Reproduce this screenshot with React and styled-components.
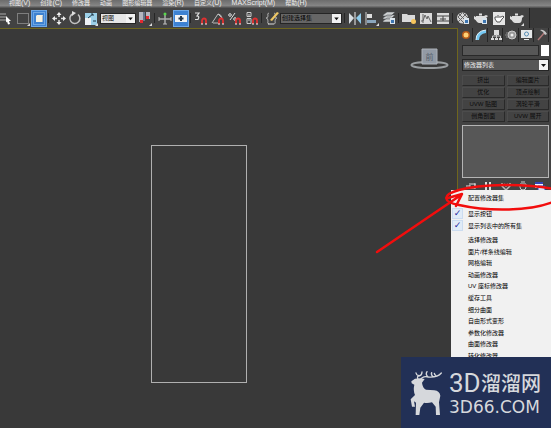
import React from 'react';
import styled, { createGlobalStyle } from 'styled-components';

const Global = createGlobalStyle`
  * { box-sizing: border-box; }
  body { margin: 0; background: #393939; font-family: "Liberation Sans", "Noto Sans CJK SC", sans-serif; font-size: 6px; color: #ddd; overflow: hidden; }
  button, input, select { font: inherit; color: inherit; margin: 0; padding: 0; border: 0; background: none; border-radius: 0; }
  svg { display: block; }
`;

const Page = styled.div`
  position: relative;
  display: flex;
  flex-direction: column;
  min-height: 100vh;
  overflow: hidden;
`;

const MenuBar = styled.nav`
  display: flex;
  align-items: flex-end;
  gap: 10px;
  height: 8px;
  padding-left: 9px;
  overflow: hidden;
  background: linear-gradient(#6c6c6c, #858585 70%, #4a4a4a);
`;

const MenuButton = styled.button`
  flex: none;
  height: 11px;
  line-height: 11px;
  color: #eee;
  white-space: nowrap;
`;

const Latin = styled.span`
  font-size: 7px;
`;

const ToolBar = styled.div`
  display: flex;
  align-items: center;
  align-self: flex-start;
  height: 20px;
  padding-right: 5px;
  background: #424242;
  border-right: 1px solid #222;
`;

const ToolGroup = styled.div`
  display: flex;
  align-items: center;
  gap: ${(p) => p.$gap}px;
`;

const Separator = styled.span`
  width: 6px;
  height: 10px;
  background: linear-gradient(90deg, transparent 2px, #262626 2px, #262626 3px, transparent 3px);
`;

const ToolButton = styled.button`
  width: 14px;
  height: 15px;
  && { background: ${(p) => (p.$active ? '#3d82d2' : 'none')}; }
  outline: ${(p) => (p.$active ? '1px solid #6ea8e6' : 'none')};
`;

const SelectBox = styled.div`
  position: relative;
  width: ${(p) => p.$width};
  height: ${(p) => p.$height}px;
  background: ${(p) => p.$fill};
  color: ${(p) => p.$ink};
  border: 1px solid #252525;

  select {
    appearance: none;
    display: block;
    width: 100%;
    height: 100%;
    padding: 0 10px 0 1px;
    line-height: 8px;
  }

  svg {
    position: absolute;
    top: 0;
    right: 0;
    height: 100%;
    background: #f2f2f2;
    pointer-events: none;
  }
`;

const Workspace = styled.main`
  flex: 1;
  display: grid;
  grid-template-columns: 1fr 93px;
`;

const Viewport = styled.section`
  position: relative;
  border-top: 1px solid #6f661e;
  border-right: 1px solid #6f661e;
`;

const Shape = styled.div`
  position: absolute;
  left: 151px;
  top: 116px;
  width: 96px;
  height: 238px;
  border: 1px solid #b0b0b0;
`;

const ViewCube = styled.svg`
  position: absolute;
  right: 8px;
  top: 18px;
`;

const Panel = styled.aside`
  display: flex;
  flex-direction: column;
  padding: 0 2px 0 4px;
  background: #434343;
`;

const Tabs = styled.div`
  display: flex;
  justify-content: space-between;
  height: 17px;
  margin-left: -3px;
`;

const Tab = styled.button`
  width: 14px;
  height: 14px;
  && { border-right: 1px solid #262626; }
`;

const NameRow = styled.div`
  display: flex;
  gap: 2px;
  height: 11px;
`;

const NameInput = styled.input`
  flex: 1;
  min-width: 0;
  && {
    background: #575757;
    border: 1px solid #292929;
  }
`;

const Swatch = styled.button`
  width: 8px;
  && { background: #fff; }
`;

const ListSelect = styled.div`
  margin-top: 3px;
`;

const ModifierGrid = styled.div`
  display: grid;
  grid-template-columns: 1fr 1fr;
  gap: 1px 2px;
  margin: 4px 0 3px;
`;

const Modifier = styled.button`
  height: 11px;
  line-height: 9px;
  && {
    color: #0c0c0c;
    border: 1px solid #4c4c4c;
    border-right-color: #292929;
    border-bottom-color: #292929;
  }
`;

const Stack = styled.div`
  height: 53px;
  background: #575757;
  border: 1px solid #b4b4b4;
`;

const StackTools = styled.div`
  display: flex;
  justify-content: space-between;
  padding: 3px 3px 0;
`;

const Popup = styled.div`
  position: absolute;
  top: 190px;
  right: 0;
  width: 100px;
  padding: 2px 0 0 1px;
  background: #f1f1f1;
  color: #000;
`;

const PopupItem = styled.button`
  display: block;
  width: 100%;
  height: 12px;
  padding-left: 16px !important;
  line-height: 12px;
  text-align: left;
`;

const CheckItem = styled.label`
  display: flex;
  align-items: center;
  gap: 5px;
  height: 12px;

  input {
    appearance: none;
    width: 11px;
    height: 11px;
    background: #e0ebf7;
    border: 1px solid #cbdcf0;
    color: #252aa0;
    font: bold 9px/9px "DejaVu Sans", sans-serif;
    text-align: center;
  }

  input:checked::before { content: "✓"; }
`;

const CheckGroup = styled.div`
  padding: 3px 0 4px;
`;

const SetList = styled.div`
  display: flex;
  flex-direction: column;
  height: 127px;

  button {
    flex: 1;
    height: auto;
    line-height: 11px;
  }
`;

const Annotation = styled.svg`
  position: absolute;
  top: 180px;
  right: 0;
  pointer-events: none;
`;

const Watermark = styled.div`
  position: absolute;
  top: 357px;
  right: 0;
  display: flex;
  align-items: center;
  gap: 6px;
  width: 150px;
  height: 71px;
  padding-left: 9px;
  background: #223056;
  color: #d6d8dc;
`;

const Brand = styled.div`
  display: flex;
  flex-direction: column;
  gap: 3px;
`;

const BrandName = styled.div`
  display: flex;
  align-items: center;
  height: 26px;
  font: 500 20px/26px "Noto Sans CJK SC", sans-serif;
`;

const BrandLead = styled.span`
  width: 32px;
  font: 26px/26px Roboto, sans-serif;
`;

const BrandSite = styled.div`
  font: 17px/16px "DejaVu Sans", sans-serif;
`;

const light = '#dedede';

const Magnet = () => (
  <>
    <path d="M8 13V9.500a2 2 0 0 1 4 0V13" fill="none" stroke="#df3030" strokeWidth="1.800" />
    <path d="M7 13h2M11 13h2" stroke="#eee" />
  </>
);

const Teapot = ({ fill = light }) => (
  <path d="M2 5h8l2-1 2 1-2 2c0 3-1 5-3 5H5C3 12 2.500 9 0 8V5l2 1zM5 4.500h3v-2H5z" fill={fill} />
);

const icons = {
  list: <><path d="M0 3h6M0 6h6M0 9h6" stroke="#aaa" /><path d="m6 5 5 5H9l1 3-2 .5-1-3-1 1z" fill="#fff" /></>,
  region: <><path d="M1.500 2.500h11v10h-11z" fill="none" stroke="#bbb" strokeDasharray="1 1" /><path d="M14 12v3h-3z" fill="#ddd" /></>,
  crossing: <><path d="M1.500 1.500h11v12h-11z" fill="none" stroke="#a5cdf3" strokeDasharray="1 1" /><path d="m4 5 1-1h6v6l-1 1H4z" fill="#f3f0e2" /><path d="M10 5v6l1-1V4z" fill="#b0bcc8" /></>,
  move: <><path d="M7 3v3M7 9v3M2 7.500h3M9 7.500h3" stroke="#ddd" strokeWidth="1.500" /><path d="m7 1 2.500 3h-5zM7 14l2.500-3h-5zM0 7.500 3 5v5zM14 7.500 11 5v5z" fill="#eee" /></>,
  rotate: <><path d="M10 3.500a5 5 0 1 1-5.500-.5" fill="none" stroke="#c2c2c2" strokeWidth="1.500" /><path d="m4 0 4 2-4 3z" fill="#ddd" /></>,
  scale: <><path d="M1 2h12v12H1z" fill="#9cd0e8" /><path d="M1 7h6v7H1z" fill="#eef2f4" /><path d="m4 7 5-4M7 3h2v2M9 10h3" stroke="#223b4b" fill="none" /><path d="M14 12v3h-3z" fill="#ddd" /></>,
  pivot: <><path d="M1 1h4v10H1zM8 1h4v7H8z" fill="#b4b7c0" /><path d="M5 1h2v9H5z" fill="#66758b" /><path d="M2 9h3v3H2zM8 5h3v3H8z" fill="#e32a30" /><path d="M14 12v3h-3z" fill="#ddd" /></>,
  manipulate: <><path d="M7 2v11M1 8h12" stroke="#aaa" strokeWidth="1.500" /><circle cx="7" cy="3" r="1.500" fill="#59d64c" /><path d="M1 6v4M13 6v4M5 13h4" stroke="#bbb" /></>,
  keyboard: <><path d="M1 4h12v7H1z" fill="#f1f3f4" /><path d="M7 5v5M4.500 7.500h5" stroke="#26394b" strokeWidth="2" /></>,
  snap: <><path d="M1 2h4L3 5q3 0 1 3.500H1" fill="none" stroke="#ddd" strokeWidth="1.200" /><Magnet /></>,
  angle: <><path d="M1 12 7 3l5 5M2 12h5M7 3q3 0 4 4" fill="none" stroke="#bbb" /><Magnet /></>,
  percent: <><path d="m2 9 5-7" stroke="#ddd" /><circle cx="2" cy="4" r="1.300" fill="none" stroke="#ddd" /><circle cx="7" cy="8" r="1.300" fill="none" stroke="#ddd" /><Magnet /></>,
  spinner: <><path d="M2 1.500h4v4H2zM2 7.500h4v5H2z" fill="none" stroke="#ccc" /><path d="M3 4h2M3 9h2" stroke="#ccc" /><Magnet /></>,
  edit: <><path d="M4 2Q2 2 3 5q0 2-2 2 2 0 2 3-1 3 1 3M9 2q2 0 1 3 0 2 2 2-2 0-2 3 1 3-1 3" fill="none" stroke="#aaa" /><path d="m5 9 7-8 2 1-7 8z" fill="#efc764" /><path d="M3 13h6" stroke="#ddd" /></>,
  mirror: <><path d="m1 2 5 5-5 6z" fill="#d6dce0" /><path d="M13 2 8 7l5 6z" fill="#8fcbea" /><path d="M7 1v13" stroke="#eee" /></>,
  align: <><path d="M1 1v13" stroke="#ccc" /><path d="M2 3h5v4H2z" fill="#ddd" /><path d="M2 9h9v3H2z" fill="#8ba7bd" /><path d="M14 12v3h-3z" fill="#ddd" /></>,
  layers: <><path d="m1 10 4-3h8l-4 4H1zM1 7l4-3h8L9 8H1zM1 4l4-3h8L9 5H1z" fill="#ced1d2" stroke="#4b4f52" strokeWidth=".5" /><path d="M8 7h5v6H8z" fill="#dce5ec" /><path d="M9 9h3v3H9z" fill="#3e76b1" /></>,
  ribbon: <><path d="M0 3h5l1 1h7v7H0z" fill="#dadada" /><circle cx="11.500" cy="10.500" r="2.500" fill="#f7c65c" /></>,
  curve: <><path d="M1 2h12v11H1z" fill="#dadada" /><path d="M2 10h2l2-6 2 4 1-3 3 6M4 3v9" stroke="#656565" fill="none" /></>,
  schematic: <><path d="M1 2h12v11H1z" fill="#dadada" /><path d="M1 5h12M1 10h12M7 5v5M4 8h6" stroke="#444" /></>,
  material: <><circle cx="6.500" cy="7" r="5.500" fill="#d4d4d4" /><path d="m3 3 8 8M2 6l6 6M7 2l5 5M10 3l-8 8M6 2 2 6" stroke="#666" /><path d="M8 7h5v6H8z" fill="#dce5ec" /><path d="M9 9h3v3H9z" fill="#3e76b1" /></>,
  setup: <><Teapot /><path d="M8 7h5v6H8z" fill="#d9e3eb" /><path d="M9 9h3v3H9z" fill="#3e76b1" /></>,
  frame: <><path d="M1 1h12v13H1z" fill="#e5e5e5" /><path d="M3 6h6l2-1 1 1-2 2-2 3H5L3 8zM6 5V4" fill="#fff" stroke="#555" /></>,
  render: <><Teapot /><path d="M14 12v3h-3z" fill="#ddd" /></>,
};

const Drawing = ({ name }) => <svg width="14" height="15" viewBox="0 0 14 15" aria-hidden="true">{icons[name]}</svg>;

const Tools = ({ names, gap = 2, active, children }) => (
  <ToolGroup $gap={gap}>
    {names.map((n) => n === '*' ? <React.Fragment key={n}>{children}</React.Fragment> : (
      <ToolButton key={n} aria-label={n} $active={active === n}><Drawing name={n} /></ToolButton>
    ))}
  </ToolGroup>
);

const Dropdown = ({ label, value, width = '100%', height, fill, ink }) => (
  <SelectBox $width={width} $height={height} $fill={fill} $ink={ink}>
    <select aria-label={label}><option>{value}</option></select>
    <svg width="9" viewBox="0 0 9 10" aria-hidden="true"><path d="M2 4h5L4.500 7z" fill="#111" /></svg>
  </SelectBox>
);

const menus = [['视图', '(V)'], ['创建', '(C)'], ['修改器', ''], ['动画', ''], ['图形编辑器', ''], ['渲染', '(R)'], ['自定义', '(U)'], ['', 'MAXScript(M)'], ['帮助', '(H)']];
const modifiers = ['挤出', '编辑面片', '优化', '顶点绘制', 'UVW 贴图', '涡轮平滑', '倒角剖面', 'UVW 展开'];
const sets = ['选择修改器', '面片/样条线编辑', '网格编辑', '动画修改器', 'UV 座标修改器', '缓存工具', '细分曲面', '自由形式变形', '参数化修改器', '曲面修改器', '转化修改器'];

const tabs = [
  ['create', <><circle cx="7" cy="7" r="4" fill="#b45a18" /><circle cx="7" cy="7" r="2.500" fill="#ffd074" /></>],
  ['modify', <><path d="M2 12Q2 3 12 2v3Q5 6 5 12z" fill="#75c8f3" /><path d="M2 12Q2 3 12 2" fill="none" stroke="#dff1fa" /></>],
  ['hierarchy', <><path d="M5 2h5v5H5zM2 10h3v2H2zM6 10h3v2H6zM10 10h3v2h-3z" fill="#ddd" /><path d="M7.500 6v5M3.500 10V8h8v2" stroke="#ccc" fill="none" /></>],
  ['motion', <><circle cx="7" cy="7" r="4" fill="#999" stroke="#ccc" /><circle cx="7" cy="7" r="1.500" fill="#eee" /><path d="M1 5h2M0 7h3M1 9h2" stroke="#888" /></>],
  ['display', <><path d="M1 2h11v8H1zM4 11h5v1H4z" fill="#e5e8e9" /><circle cx="6.500" cy="6" r="2" fill="none" stroke="#568eb5" /></>],
  ['utilities', <><path d="m3 12 7-8" stroke="#ae7777" strokeWidth="1.500" /><path d="M5 2q4-1 7 4l-2 1-2-3z" fill="#c5c5c5" /></>],
];

const stackTools = [
  ['pin', <><path d="M1 5h4M5 2v6M6 3h4v4H6M10 2v6" fill="none" stroke="#ddd" /></>],
  ['result', <><path d="M3 1h2v8H3zM7 1h2v8H7z" fill="#ddd" /></>],
  ['unique', <><path d="M2 2v3l4 4 4-4V2M4 3l2 2 2-2" fill="none" stroke="#bbb" strokeWidth="1.500" /></>],
  ['remove', <><path d="M3 3h6v3q0 3-3 3T3 6zM4 1h4" fill="none" stroke="#ccc" /></>],
  ['configure', <><path d="M1 1h8v6H1z" fill="#f2f4ff" /><path d="M1 1h8v2H1z" fill="#3145b7" /><path d="M4 5h7v5H4z" fill="#dce3f6" stroke="#3145b7" /></>],
];

const Deer = () => (
  <svg width="33" height="46" viewBox="0 0 99 138" aria-label="deer">
    <g fill="none" stroke="#d6d8dc" strokeWidth="4" strokeLinecap="round">
      <path d="M31 30Q38 17 55 21 82 23 94 9M55 21Q45 14 51 5M69 21Q62 13 65 8M79 18q-6-4-6-8M25 29Q19 20 27 16M27 18q-8-2-9-9M28 18q8-3 8-12" />
    </g>
    <path d="M4 34 15 26 31 25 44 27 36 38Q38 54 48 59L73 61Q89 63 91 77L87 97 90 135H78L77 110 66 97Q53 100 42 98L31 113 28 135H17L18 98 12 94 15 110H6L2 88 15 75Q9 61 13 44L5 40z" fill="#d6d8dc" />
  </svg>
);

export default function App() {
  return (
    <Page>
      <Global />
      <MenuBar>
        {menus.map(([zh, en]) => <MenuButton key={zh + en}>{zh}<Latin>{en}</Latin></MenuButton>)}
      </MenuBar>
      <ToolBar>
        <Tools names={['list', 'region', 'crossing']} active="crossing" />
        <Separator />
        <Tools names={['move', 'rotate', 'scale', '*', 'pivot']}>
          <Dropdown label="参考坐标系" value="视图" width="36px" height={11} fill="#e6e6e6" ink="#111" />
        </Tools>
        <Separator />
        <Tools names={['manipulate', 'keyboard']} active="keyboard" />
        <Separator />
        <Tools names={['snap', 'angle', 'percent', 'spinner']} gap={3} />
        <Separator />
        <Tools names={['edit', '*']} gap={1}>
          <Dropdown label="命名选择集" value="创建选择集" width="62px" height={11} fill="#666" ink="#000" />
        </Tools>
        <Separator />
        <Tools names={['mirror', 'align', 'layers']} gap={3} />
        <Separator />
        <Tools names={['ribbon', 'curve', 'schematic']} gap={3} />
        <Separator />
        <Tools names={['material', 'setup', 'frame', 'render']} gap={4} />
      </ToolBar>
      <Workspace>
        <Viewport>
          <Shape />
          <ViewCube width="39" height="24" viewBox="0 0 39 24" aria-label="前">
            <ellipse cx="19.500" cy="18" rx="18" ry="3" fill="none" stroke="#9b9fa2" strokeWidth="2" />
            <path d="M12 2h15v15H12z" fill="#929aa5" stroke="#adb2b9" />
            <text x="19.500" y="13" textAnchor="middle" fontSize="8" fill="#555e6b">前</text>
          </ViewCube>
        </Viewport>
        <Panel>
          <Tabs>
            {tabs.map(([name, art]) => (
              <Tab key={name} aria-label={name}><svg width="14" height="14" viewBox="0 0 14 14">{art}</svg></Tab>
            ))}
          </Tabs>
          <NameRow><NameInput aria-label="名称" /><Swatch aria-label="颜色" /></NameRow>
          <ListSelect>
            <Dropdown label="修改器列表" value="修改器列表" height={12} fill="#575757" ink="#eee" />
          </ListSelect>
          <ModifierGrid>{modifiers.map((m) => <Modifier key={m}>{m}</Modifier>)}</ModifierGrid>
          <Stack />
          <StackTools>
            {stackTools.map(([name, art]) => (
              <button key={name} aria-label={name}><svg width="12" height="11" viewBox="0 0 12 11">{art}</svg></button>
            ))}
          </StackTools>
        </Panel>
      </Workspace>
      <Popup>
        <PopupItem>配置修改器集</PopupItem>
        <CheckGroup>
          {['显示按钮', '显示列表中的所有集'].map((t) => (
            <CheckItem key={t}><input type="checkbox" defaultChecked />{t}</CheckItem>
          ))}
        </CheckGroup>
        <SetList>{sets.map((s) => <PopupItem key={s}>{s}</PopupItem>)}</SetList>
      </Popup>
      <Annotation width="176" height="78" viewBox="0 0 176 78" aria-hidden="true">
        <g fill="none" stroke="#f20d0d" strokeWidth="2.500" strokeLinecap="round" strokeLinejoin="round">
          <path d="M178 9C150 3 105 4 84 10 66 15 68 22 84 25 115 32 155 31 178 22" />
          <path d="M2 72 86 15M73 18 87 14 81 26" />
        </g>
      </Annotation>
      <Watermark>
        <Deer />
        <Brand>
          <BrandName><BrandLead>3D</BrandLead>溜溜网</BrandName>
          <BrandSite>3D66.COM</BrandSite>
        </Brand>
      </Watermark>
    </Page>
  );
}
